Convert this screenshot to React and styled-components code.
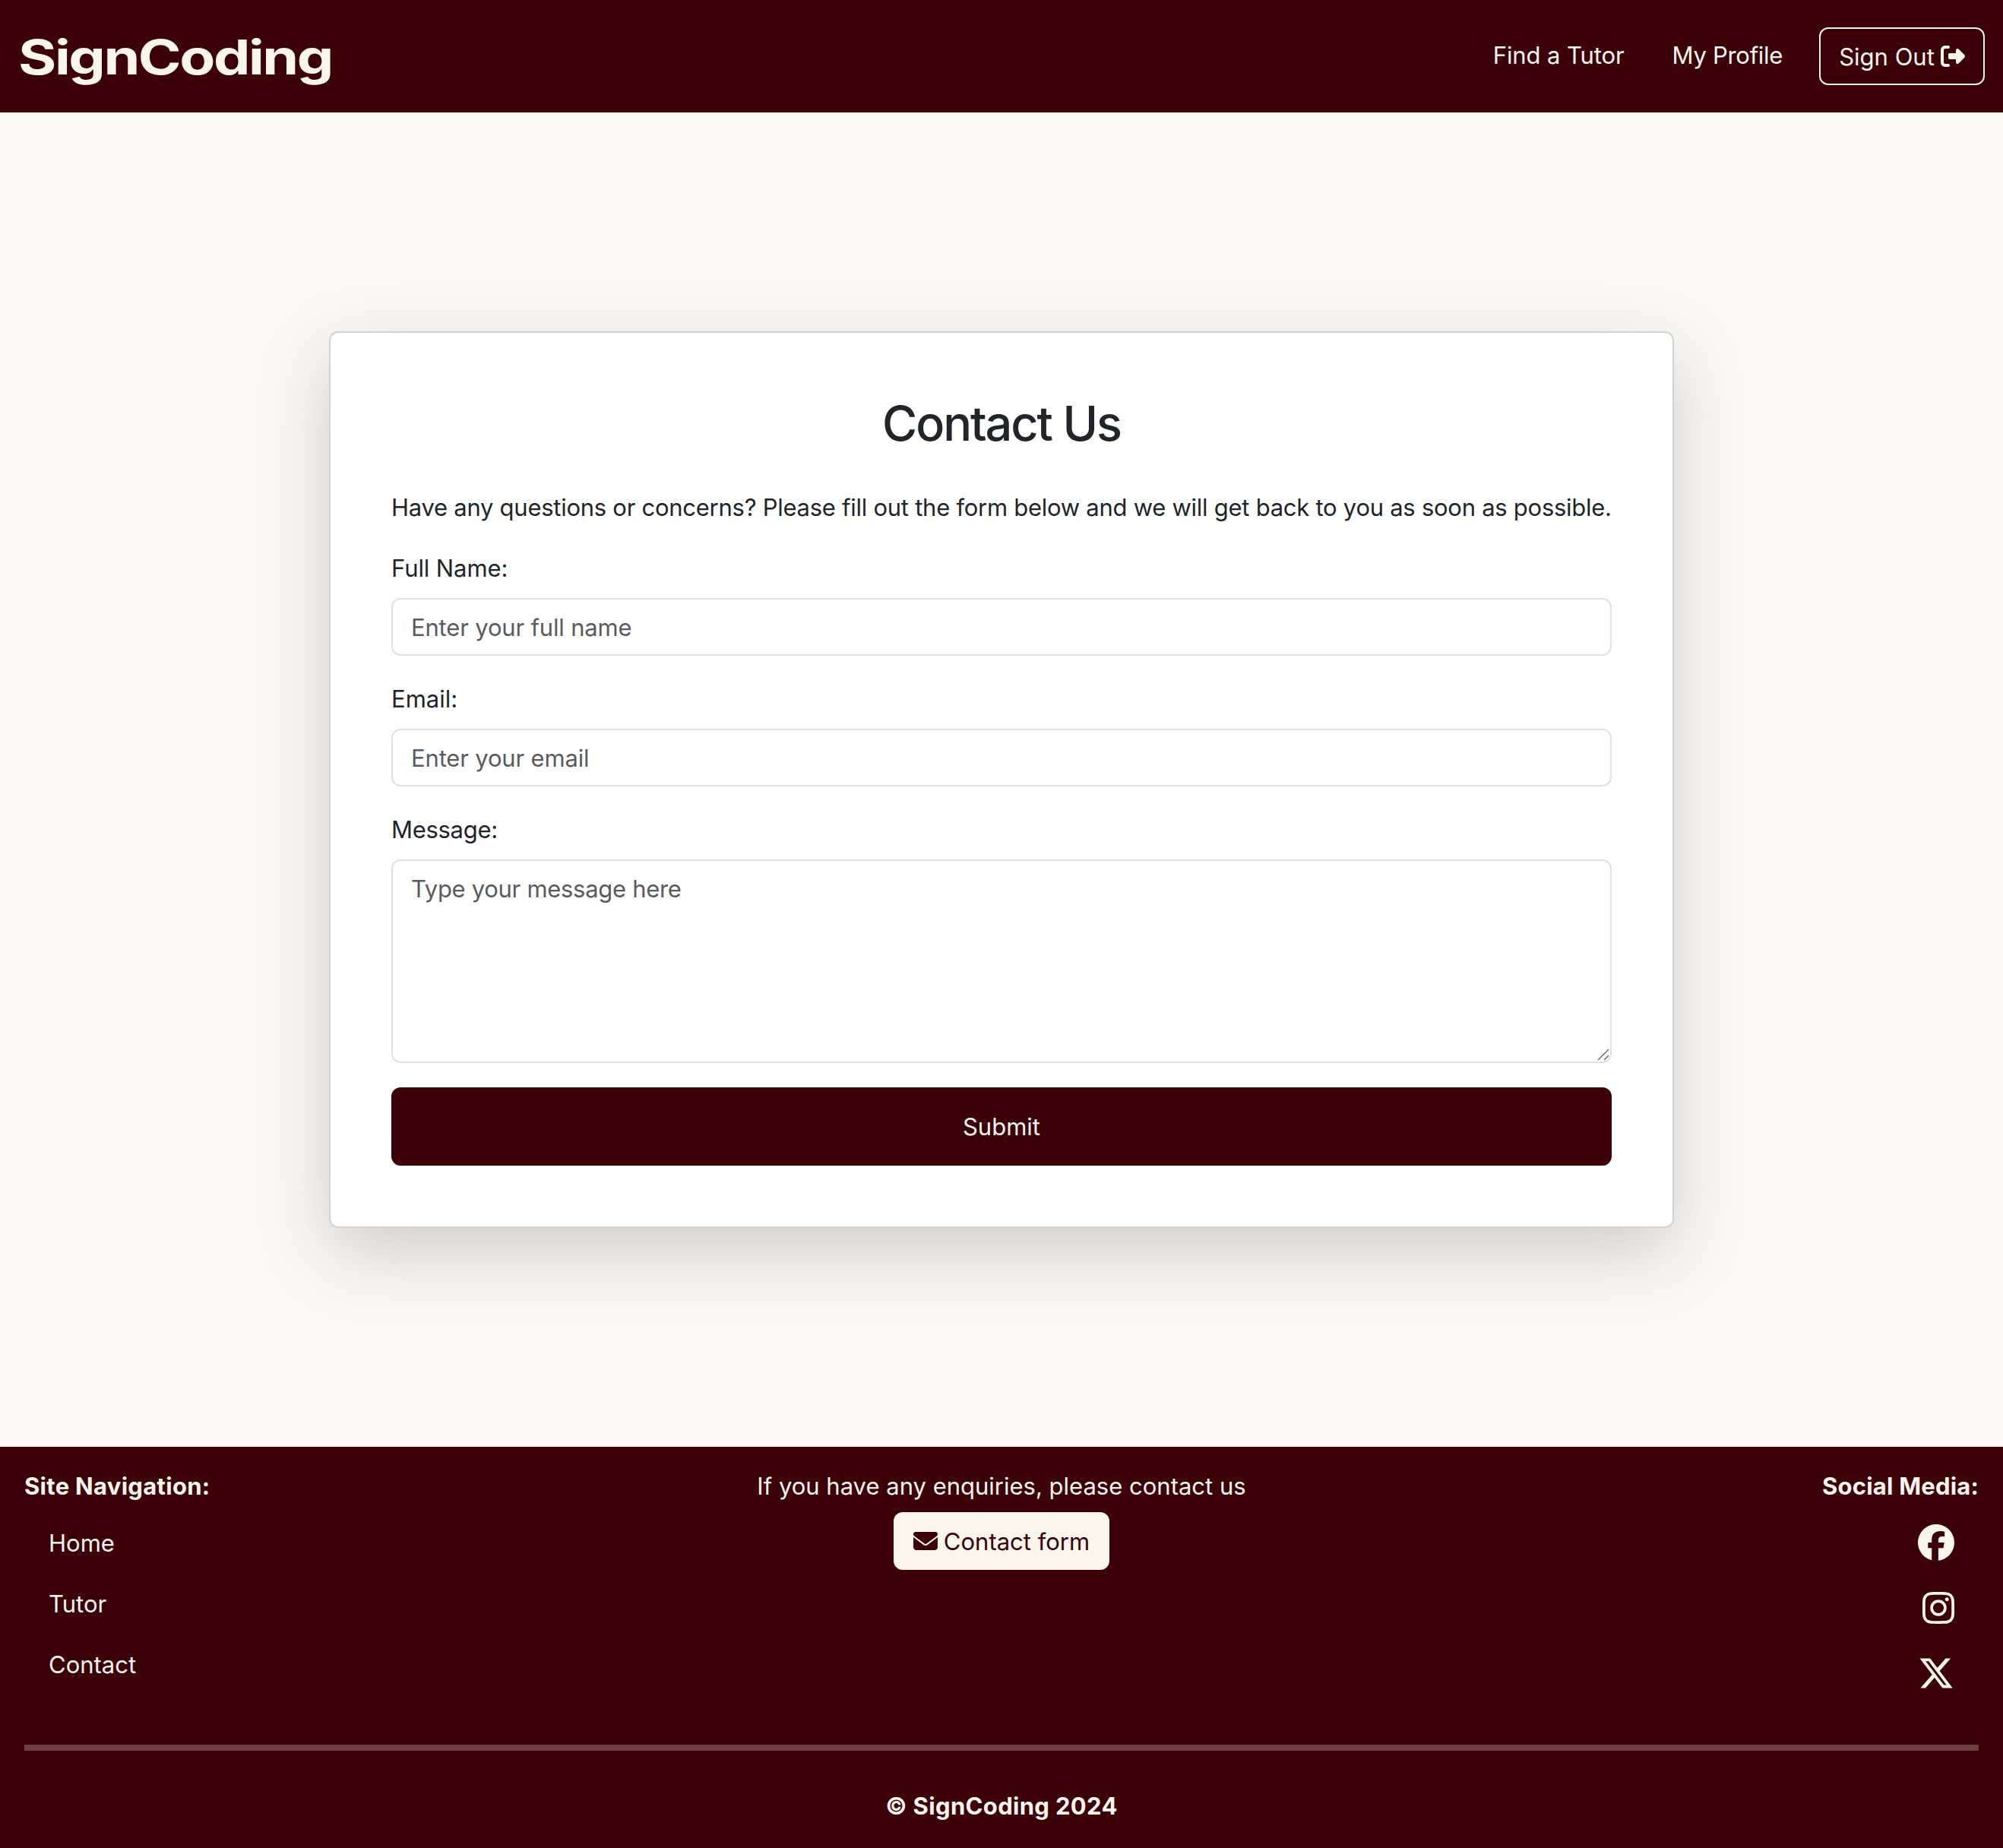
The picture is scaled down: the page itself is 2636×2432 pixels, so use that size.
import React from "react";
import styled, { createGlobalStyle } from "styled-components";
import { FaEnvelope, FaInstagram, FaRightFromBracket, FaXTwitter } from "react-icons/fa6";

const wine = "#3b0008";
const cream = "#faf6ec";
const ink = "#212529";

const GlobalStyle = createGlobalStyle`
  *, *::before, *::after { box-sizing: border-box; }
  body {
    margin: 0;
    background: #fbf9f5;
    color: ${ink};
    font-family: Inter, "Liberation Sans", sans-serif;
    font-size: 31px;
    line-height: 48px;
  }
  a { color: inherit; text-decoration: none; }
`;

const Page = styled.div`
  display: flex;
  flex-direction: column;
  height: 2432px;
`;

const Header = styled.header`
  display: flex;
  align-items: center;
  justify-content: space-between;
  height: 148px;
  padding: 0 24px;
  background: ${wine};
  color: ${cream};
`;

const Brand = styled.a`
  padding-top: 2px;
  font-size: 63px;
  font-weight: 730;
  line-height: 76px;
  letter-spacing: -2px;
  white-space: nowrap;
  transform: scaleX(1.22);
  transform-origin: left center;
`;

const Nav = styled.nav`
  display: flex;
  align-items: center;
`;

const NavLink = styled.a`
  margin-right: ${(p) => p.$after}px;
  padding-bottom: 2px;
  letter-spacing: ${(p) => p.$track || 0}px;
  white-space: nowrap;
`;

const Button = styled.a`
  display: inline-flex;
  align-items: center;
  justify-content: center;
  gap: 8px;
  width: ${(p) => p.$width}px;
  height: 76px;
  border: 2px solid ${cream};
  border-radius: 12px;
  background: ${(p) => (p.$filled ? cream : "transparent")};
  color: ${(p) => (p.$filled ? wine : cream)};
  white-space: nowrap;
`;

const ButtonLabel = styled.span`
  padding-top: 2px;
`;

const Main = styled.main`
  display: flex;
  flex: 1;
  align-items: center;
  justify-content: center;
`;

const Card = styled.section`
  display: flex;
  flex-direction: column;
  width: 1770px;
  height: 1180px;
  padding: 80px;
  border: 2px solid #d2d2d3;
  border-radius: 12px;
  background: #fff;
  box-shadow: 0 32px 96px rgba(0, 0, 0, 0.175);
`;

const Title = styled.h1`
  margin: 0 0 47px;
  padding-top: 1px;
  font-size: 63px;
  font-weight: 540;
  line-height: 77px;
  text-align: center;
  letter-spacing: -2.1px;
`;

const Intro = styled.p`
  margin: 0 0 31px;
  padding-top: 1px;
  white-space: nowrap;
  letter-spacing: -0.265px;
`;

const Field = styled.div`
  display: flex;
  flex-direction: column;
  gap: 14px;
  margin-bottom: 32px;
`;

const FieldLabel = styled.label`
  align-self: flex-start;
  line-height: 50px;
  letter-spacing: ${(p) => p.$track || 0}px;
`;

const Input = styled.input`
  width: 100%;
  height: 76px;
  padding: 12px 24px;
  border: 2px solid #dee2e6;
  border-radius: 12px;
  background: #fff;
  font: inherit;
  letter-spacing: ${(p) => p.$track || 0}px;
  &::placeholder { color: #595c5f; opacity: 1; }
`;

const AreaWrap = styled.div`
  position: relative;
  height: 268px;
`;

const Area = styled(Input)`
  display: block;
  height: 268px;
  padding-top: 13px;
  resize: none;
`;

const Grip = styled.svg`
  position: absolute;
  right: 3px;
  bottom: 3px;
`;

const Submit = styled.button`
  height: 103px;
  border: 0;
  border-radius: 12px;
  background: ${wine};
  color: ${cream};
  font: inherit;
`;

const Footer = styled.footer`
  display: flex;
  flex-direction: column;
  height: 528px;
  padding: 28px 32px 0;
  background: ${wine};
  color: ${cream};
`;

const Columns = styled.div`
  display: grid;
  grid-template-columns: 1fr 1fr 1fr;
  height: 364px;
`;

const Column = styled.div`
  display: flex;
  flex-direction: column;
  align-items: ${(p) => p.$align};
`;

const Heading = styled.strong`
  font-weight: 700;
  letter-spacing: ${(p) => p.$track || 0}px;
`;

const LinkList = styled.div`
  display: flex;
  flex-direction: column;
  align-items: flex-start;
  gap: 32px;
  padding: 27px 32px 0;
`;

const SocialList = styled.div`
  display: flex;
  flex-direction: column;
  align-items: flex-end;
  gap: 38px;
  padding: 26px 32px 0;
  svg { display: block; }
`;

const InstagramIcon = styled(FaInstagram)`
  width: 42px;
  height: 48px;
`;

const Enquiry = styled.p`
  margin: 0 0 10px;
  white-space: nowrap;
`;

const Rule = styled.hr`
  width: 100%;
  height: 8px;
  margin: 0;
  border: 0;
  background: #6c4042;
`;

const Copyright = styled.strong`
  margin-top: 49px;
  text-align: center;
  font-weight: 700;
  letter-spacing: 0.33px;
`;

function Facebook() {
  return (
    <svg width="48" height="48" viewBox="0 0 512 512" fill="currentColor">
      <path d="M512 256C512 114.6 397.4 0 256 0S0 114.6 0 256C0 376 82.7 476.8 194.2 504.5V334.2H141.4V256h52.8V222.3c0-87.1 39.4-127.5 125-127.5 16.2 0 44.2 3.2 55.7 6.4V172c-6-.6-16.5-1-29.6-1-42 0-58.2 15.9-58.2 57.2V256h83.6l-14.4 78.2H287V510.1C413.8 494.8 512 386.9 512 256z" />
    </svg>
  );
}

export default function App() {
  return (
    <Page>
      <GlobalStyle />
      <Header>
        <Brand href="#">SignCoding</Brand>
        <Nav>
          <NavLink href="#" $after={63} $track={-0.1}>Find a Tutor</NavLink>
          <NavLink href="#" $after={48} $track={-0.3}>My Profile</NavLink>
          <Button href="#" $width={218}>
            <ButtonLabel>Sign Out</ButtonLabel>
            <FaRightFromBracket size={32} />
          </Button>
        </Nav>
      </Header>
      <Main>
        <Card>
          <Title>Contact Us</Title>
          <Intro>
            Have any questions or concerns? Please fill out the form below and we will get back to you as soon as possible.
          </Intro>
          <Field>
            <FieldLabel $track={-0.1}>Full Name:</FieldLabel>
            <Input $track={-0.17} placeholder="Enter your full name" />
          </Field>
          <Field>
            <FieldLabel>Email:</FieldLabel>
            <Input $track={-0.16} placeholder="Enter your email" />
          </Field>
          <Field>
            <FieldLabel $track={-0.3}>Message:</FieldLabel>
            <AreaWrap>
              <Area as="textarea" $track={-0.3} placeholder="Type your message here" />
              <Grip width="16" height="16" stroke="#666" strokeWidth="1.4">
                <path d="M1 15 15 1M9 15l6-6" />
              </Grip>
            </AreaWrap>
          </Field>
          <Submit>Submit</Submit>
        </Card>
      </Main>
      <Footer>
        <Columns>
          <Column $align="flex-start">
            <Heading $track={0.3}>Site Navigation:</Heading>
            <LinkList>
              <a href="#">Home</a>
              <a href="#">Tutor</a>
              <a href="#">Contact</a>
            </LinkList>
          </Column>
          <Column $align="center">
            <Enquiry>If you have any enquiries, please contact us</Enquiry>
            <Button href="#" $filled $width={284}>
              <FaEnvelope size={32} />
              <ButtonLabel>Contact form</ButtonLabel>
            </Button>
          </Column>
          <Column $align="flex-end">
            <Heading $track={0.2}>Social Media:</Heading>
            <SocialList>
              <Facebook />
              <InstagramIcon />
              <FaXTwitter size={48} />
            </SocialList>
          </Column>
        </Columns>
        <Rule />
        <Copyright>© SignCoding 2024</Copyright>
      </Footer>
    </Page>
  );
}
